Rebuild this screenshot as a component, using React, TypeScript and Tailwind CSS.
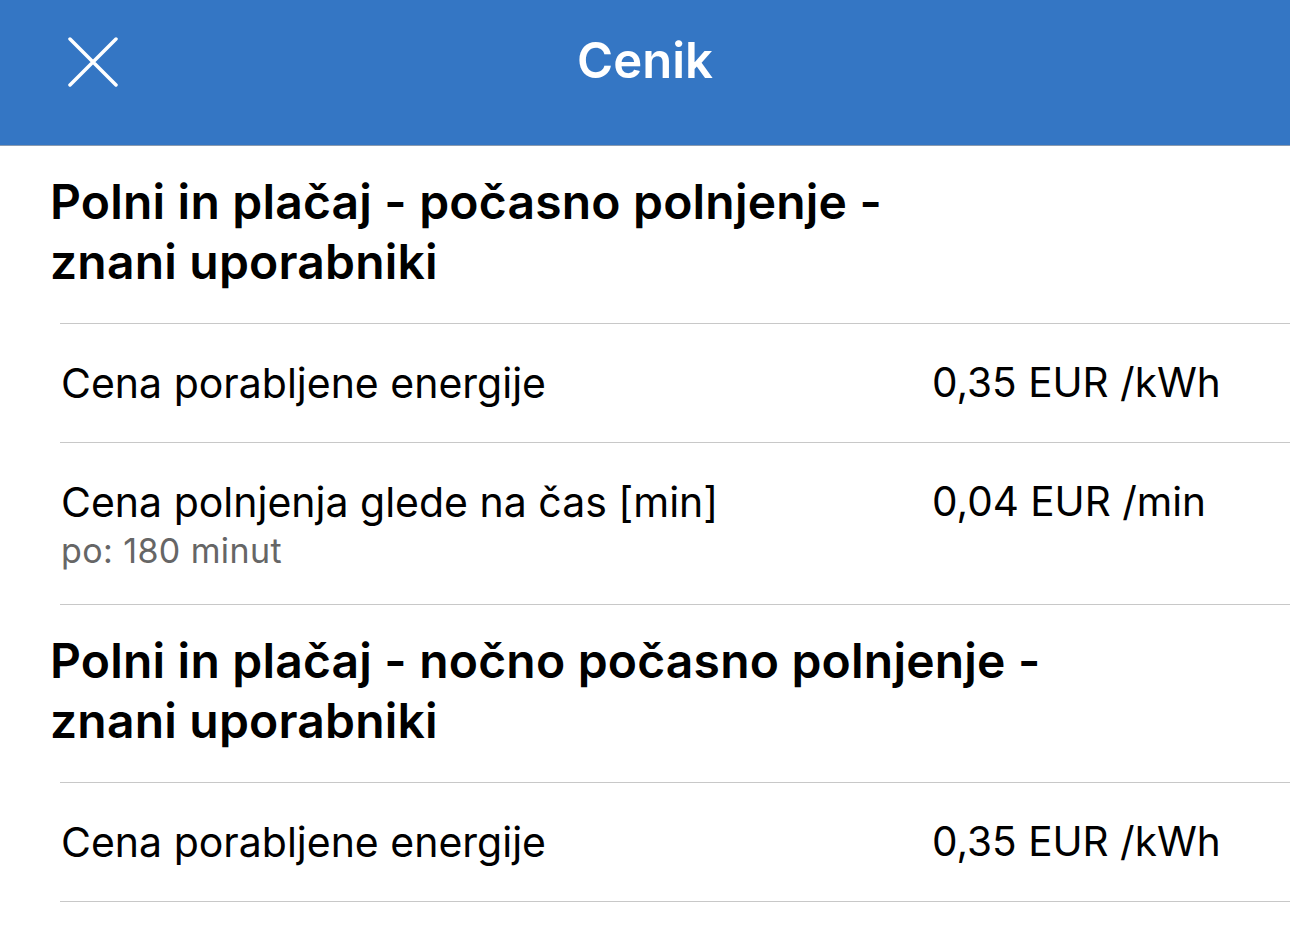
import React from "react";

interface PriceRow {
  label: string;
  value: string;
  note?: string;
}

interface Tariff {
  title: string;
  subtitle: string;
  rows: PriceRow[];
}

const tariffs: Tariff[] = [
  {
    title: "Polni in plačaj - počasno polnjenje -",
    subtitle: "znani uporabniki",
    rows: [
      { label: "Cena porabljene energije", value: "0,35 EUR /kWh" },
      {
        label: "Cena polnjenja glede na čas [min]",
        value: "0,04 EUR /min",
        note: "po: 180 minut",
      },
    ],
  },
  {
    title: "Polni in plačaj - nočno počasno polnjenje -",
    subtitle: "znani uporabniki",
    rows: [{ label: "Cena porabljene energije", value: "0,35 EUR /kWh" }],
  },
];

function Row({ row }: { row: PriceRow }) {
  return (
    <div className="flex border-b border-[#c8c8c8] ml-[60px] pl-px">
      <div className={`flex-1 ${row.note ? "pt-[35px] pb-[38px]" : "py-[35px]"}`}>
        <p className="text-[41px] leading-[48px] text-black">{row.label}</p>
        {row.note && (
          <p className="mt-[10px] text-[34px] leading-[30px] tracking-[0.4px] text-[#666666]">
            {row.note}
          </p>
        )}
      </div>
      <div className="w-[358px] py-[35px]">
        <p className="text-[40.5px] leading-[48px] text-black">{row.value}</p>
      </div>
    </div>
  );
}

export default function App() {
  return (
    <div
      className="w-[1290px] h-[939px] overflow-hidden bg-white"
      style={{ fontFamily: "Inter, 'Noto Sans', sans-serif" }}
    >
      <div className="h-[146px] bg-[#3476c4] border-b border-[#8a9bb0] flex items-center relative">
        <button className="absolute left-[68px] top-[37px] w-[50px] h-[50px]">
          <svg width="50" height="50" viewBox="0 0 50 50" fill="none">
            <path
              d="M2 2 L48 48 M48 2 L2 48"
              stroke="white"
              strokeWidth="3.5"
              strokeLinecap="round"
            />
          </svg>
        </button>
        <h1 className="w-full text-center text-white text-[49px] font-semibold leading-none -mt-[24px]">
          Cenik
        </h1>
      </div>

      {tariffs.map((t, i) => (
        <section key={i}>
          <h2 className="pl-[50px] pt-[26px] pb-[31px] text-[48px] leading-[60px] font-semibold text-black tracking-[0.2px]">
            <span className="block">{t.title}</span>
            <span className="block">{t.subtitle}</span>
          </h2>
          <div className="border-t border-[#c8c8c8] ml-[60px]" />
          {t.rows.map((r, j) => (
            <Row key={j} row={r} />
          ))}
        </section>
      ))}
    </div>
  );
}
